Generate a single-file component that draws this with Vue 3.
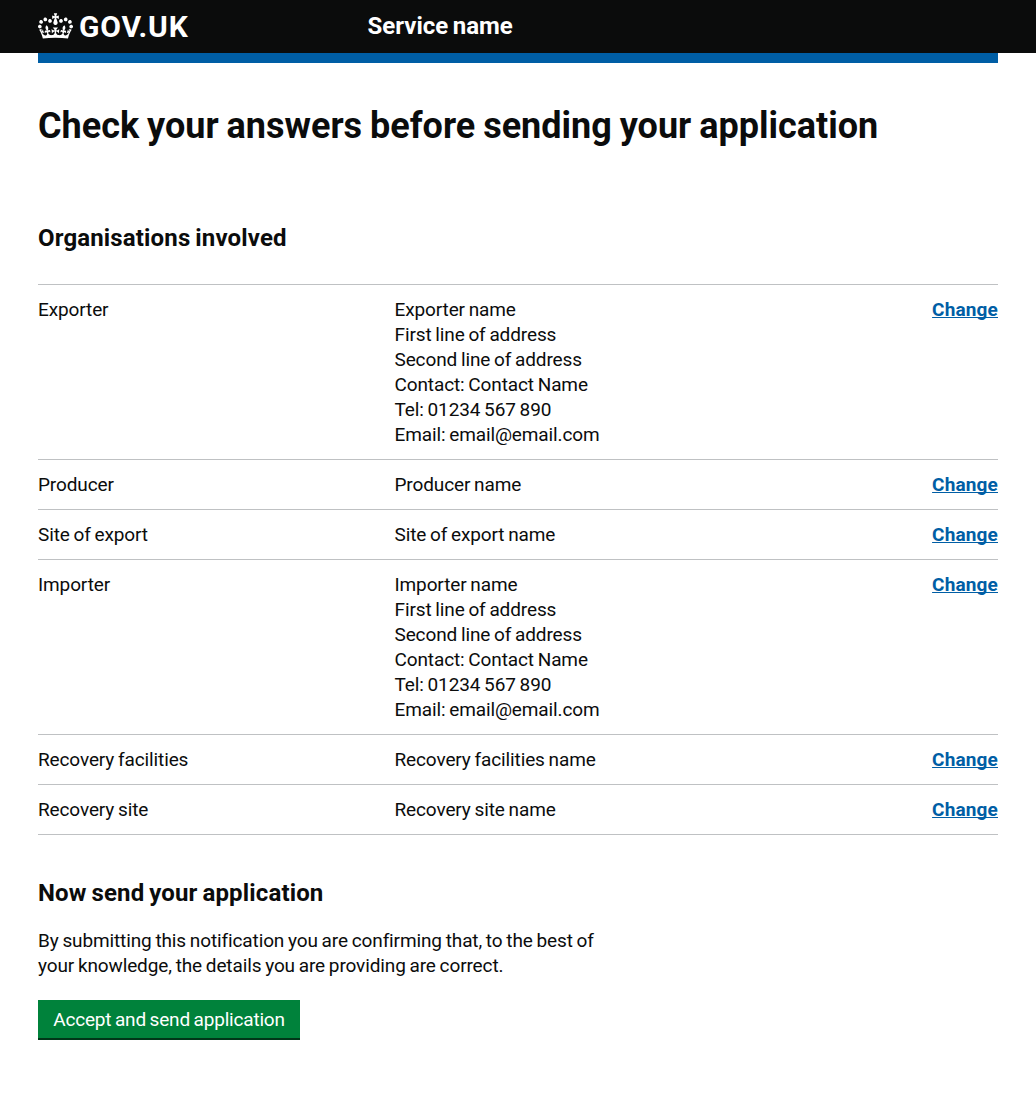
<script setup>
const address = (role) => [
  `${role} name`,
  'First line of address',
  'Second line of address',
  'Contact: Contact Name',
  'Tel: 01234 567 890',
  'Email: email@email.com',
]

const rows = [
  { key: 'Exporter', lines: address('Exporter') },
  { key: 'Producer', lines: ['Producer name'] },
  { key: 'Site of export', lines: ['Site of export name'] },
  { key: 'Importer', lines: address('Importer') },
  { key: 'Recovery facilities', lines: ['Recovery facilities name'] },
  { key: 'Recovery site', lines: ['Recovery site name'] },
]
</script>

<template>
  <div class="page">
    <header class="header">
      <div class="header-inner">
        <a class="logo">
          <svg class="crown" viewBox="0 0 132 97" width="35" height="26" aria-hidden="true">
            <path
              fill="currentColor"
              fill-rule="evenodd"
              d="M25 30.2c3.5 1.5 7.7-.2 9.1-3.7 1.5-3.6-.2-7.8-3.9-9.2-3.6-1.4-7.6.3-9.1 3.9-1.4 3.5.3 7.5 3.9 9zM9 39.5c3.6 1.5 7.8-.2 9.2-3.7 1.5-3.6-.2-7.8-3.9-9.1-3.6-1.5-7.6.2-9.1 3.8-1.4 3.5.3 7.5 3.8 9zM4.4 57.2c3.5 1.5 7.7-.2 9.1-3.8 1.5-3.6-.2-7.7-3.9-9.1-3.5-1.5-7.6.3-9.1 3.8-1.4 3.5.3 7.6 3.9 9.1zm38.3-21.4c3.5 1.5 7.7-.2 9.1-3.8 1.5-3.6-.2-7.7-3.9-9.1-3.6-1.5-7.6.3-9.1 3.8-1.3 3.6.4 7.7 3.9 9.1zm64.4-5.6c-3.6 1.5-7.8-.2-9.1-3.7-1.5-3.6.2-7.8 3.8-9.2 3.6-1.4 7.7.3 9.2 3.9 1.3 3.5-.4 7.5-3.9 9zm15.9 9.3c-3.6 1.5-7.7-.2-9.1-3.7-1.5-3.6.2-7.8 3.7-9.1 3.6-1.5 7.7.2 9.2 3.8 1.5 3.5-.3 7.5-3.8 9zm4.7 17.7c-3.6 1.5-7.8-.2-9.2-3.8-1.5-3.6.2-7.7 3.9-9.1 3.6-1.5 7.7.3 9.2 3.8 1.3 3.5-.4 7.6-3.9 9.1zM89.3 35.8c-3.6 1.5-7.8-.2-9.2-3.8-1.4-3.6.2-7.7 3.9-9.1 3.6-1.5 7.7.3 9.2 3.8 1.4 3.6-.3 7.7-3.9 9.1zM69.7 17.7l8.9 4.7V9.3l-8.9 2.8c-.2-.3-.5-.6-.9-.9L72.4 0H59.6l3.5 11.2c-.3.3-.6.5-.9.9l-8.8-2.8v13.1l8.8-4.7c.3.3.6.7.9.9l-5 15.4v.1c-.2.8-.4 1.6-.4 2.4 0 4.1 3.1 7.5 7 8.1h.2c.3 0 .7.1 1 .1.4 0 .7 0 1-.1h.2c4-.6 7.1-4.1 7.1-8.1 0-.8-.1-1.7-.4-2.4V34l-5.1-15.4c.4-.2.7-.6 1-.9zM66 92.8c16.9 0 32.8 1.1 47.1 3.2 4-16.9 8.9-26.7 14-33.5l-9.6-3.4c1 4.9 1.1 7.2 0 10.2-1.5-1.4-3-4.3-4.2-8.7L108.6 76c2.8-2 5-3.2 7.5-3.3-4.4 9.4-10 11.9-13.6 11.2-4.3-.8-6.3-4.6-5.6-7.9 1-4.7 5.7-5.9 8-.5 4.3-8.7-3-11.4-7.6-8.8 7.1-7.2 7.9-13.5 2.1-21.1-8 6.1-8.1 12.3-4.5 20.8-4.7-5.4-12.1-2.5-9.5 6.2 3.4-5.2 7.9-2 7.2 3.1-.6 4.3-6.4 7.8-13.5 7.2-10.3-.9-10.9-8-11.2-13.8 2.5-.5 7.1 1.8 11 7.3L80.2 60c-4.1 4.4-8 5.3-12.3 5.4 1.4-4.4 8-11.6 8-11.6H55.5s6.4 7.2 7.9 11.6c-4.2-.1-8-1-12.3-5.4l1.4 16.4c3.9-5.5 8.5-7.7 10.9-7.3-.3 5.8-.9 12.8-11.1 13.8-7.2.6-12.9-2.9-13.5-7.2-.7-5 3.8-8.3 7.1-3.1 2.7-8.7-4.6-11.6-9.4-6.2 3.7-8.5 3.6-14.7-4.6-20.8-5.8 7.6-5 13.9 2.2 21.1-4.7-2.6-11.9.1-7.7 8.8 2.3-5.5 7.1-4.2 8.1.5.7 3.3-1.3 7.1-5.7 7.9-3.5.7-9-1.8-13.5-11.2 2.5.1 4.7 1.3 7.5 3.3l-4.7-15.4c-1.2 4.4-2.7 7.2-4.3 8.7-1.1-3-.9-5.3 0-10.2l-9.5 3.4c5 6.9 9.9 16.7 14 33.5 14.8-2.1 30.8-3.2 47.7-3.2z"
            />
          </svg>
          <span class="logotype">GOV.UK</span>
        </a>
        <a class="service">Service name</a>
      </div>
    </header>
    <div class="bar"></div>

    <main class="main">
      <h1 class="title">Check your answers before sending your application</h1>

      <h2 class="subtitle organisations">Organisations involved</h2>
      <dl class="summary">
        <div v-for="row in rows" :key="row.key" class="row">
          <dt class="key">{{ row.key }}</dt>
          <dd class="value">
            <div v-for="line in row.lines" :key="line">{{ line }}</div>
          </dd>
          <dd class="action"><a class="link">Change</a></dd>
        </div>
      </dl>

      <h2 class="subtitle send">Now send your application</h2>
      <p class="body">
        By submitting this notification you are confirming that, to the best of<br />
        your knowledge, the details you are providing are correct.
      </p>
      <button class="button" type="button">Accept and send application</button>
    </main>
  </div>
</template>

<style>
body {
  margin: 0;
  background: #fff;
}
</style>

<style scoped>
.page {
  min-height: 1096px;
  font-family: Roboto, "Liberation Sans", sans-serif;
  font-size: 19px;
  line-height: 25px;
  letter-spacing: -0.12px;
  word-spacing: -0.8px;
  color: #0b0c0c;
}
.header {
  height: 53px;
  background: #0b0c0c;
  color: #fff;
}
.header-inner {
  display: flex;
  align-items: center;
  height: 53px;
  margin: 0 38px;
}
.logo {
  display: flex;
  align-items: center;
  gap: 6px;
  width: 329.5px;
}
.crown {
  display: block;
  flex: none;
  margin-bottom: 1px;
}
.logotype {
  font-size: 30px;
  line-height: 30px;
  font-weight: 700;
  letter-spacing: 0.8px;
}
.service {
  padding-bottom: 2px;
  font-size: 24px;
  line-height: 30px;
  font-weight: 700;
  letter-spacing: 0;
  word-spacing: -1.5px;
}
.bar {
  height: 10px;
  margin: 0 38px;
  background: #005ea5;
}
.main {
  margin: 0 38px;
}
.title {
  margin: 0;
  padding-top: 43px;
  font-size: 36px;
  line-height: 40px;
  font-weight: 700;
  letter-spacing: 0;
  word-spacing: -1px;
  white-space: nowrap;
}
.subtitle {
  margin: 0;
  font-size: 24px;
  line-height: 30px;
  font-weight: 700;
  letter-spacing: 0.15px;
  word-spacing: -1.2px;
}
.organisations {
  padding-top: 77px;
}
.summary {
  margin: 31px 0 0;
  border-top: 1px solid #bfc1c3;
}
.row {
  display: flex;
  padding: 12px 0;
  border-bottom: 1px solid #bfc1c3;
}
.key {
  width: 356.5px;
}
.value {
  flex: 1;
  margin: 0;
}
.action {
  margin: 0;
}
.link {
  color: #005ea5;
  font-weight: 700;
  letter-spacing: 0.15px;
  text-decoration: underline;
  text-decoration-thickness: 1px;
  text-underline-offset: 1px;
  text-decoration-skip-ink: none;
}
.send {
  padding-top: 43px;
}
.body {
  margin: 20px 0 0;
  white-space: nowrap;
}
.button {
  display: block;
  width: 262px;
  height: 40px;
  margin: 22px 0 0;
  padding: 0;
  border: 0;
  border-bottom: 2px solid #003618;
  background: #00823b;
  color: #fff;
  font: inherit;
  letter-spacing: -0.2px;
  word-spacing: inherit;
}
</style>
